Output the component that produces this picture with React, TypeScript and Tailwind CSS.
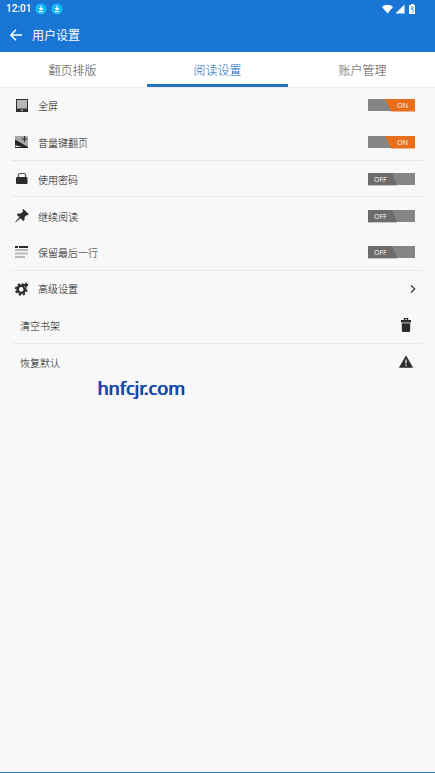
import { useState } from "react";
import type { ReactNode } from "react";

type SwitchProps = {
    id: string;
    checked: boolean;
    onChange: (checked: boolean) => void;
};

const tabs = ["翻页排版", "阅读设置", "账户管理"];

function DownloadBadge() {
    return (
        <svg viewBox="0 0 12 12" className="h-3 w-3">
            <circle cx="6" cy="6" r="5.6" fill="#12b9fb" />
            <path d="M6 2.8v4M4.2 5.2 6 7l1.8-1.8M3.8 8.6h4.4" fill="none" stroke="#fff" strokeWidth="1.2" />
        </svg>
    );
}

function StatusBar() {
    return (
        <div className="flex h-[18px] items-center justify-between pr-[18px] pl-1.5 text-white">
            <div className="flex items-center gap-1">
                <span className="w-[25px] font-[Roboto,sans-serif] text-[10px] leading-none font-medium whitespace-nowrap">12:01</span>
                <DownloadBadge />
                <DownloadBadge />
            </div>
            <div className="flex items-center gap-0.5">
                <svg viewBox="0 0 11 10" className="h-2.5 w-[11px]" fill="currentColor">
                    <path d="M5.5 9.5 0 3C1.5 1.4 3.5.7 5.5.7S9.5 1.4 11 3z" />
                </svg>
                <svg viewBox="0 0 10 10" className="h-2.5 w-2.5" fill="currentColor">
                    <path d="M9.5.5v9H.5z" />
                </svg>
                <svg viewBox="0 0 10 10" className="h-2.5 w-2.5" fill="currentColor">
                    <path d="M4 0h3v1h1v9H2V1h2z" />
                    <path d="M5 2v3.2L3.6 4M5 5.2l1.8 1.2L5.2 8.5M5.4 4.6 6.6 3.4" stroke="#1976d4" strokeWidth=".8" fill="none" />
                </svg>
            </div>
        </div>
    );
}

function DeviceIcon() {
    return (
        <svg viewBox="0 0 14 14" className="h-3.5 w-3.5">
            <path d="M1 0h12v13H1z" fill="#303030" />
            <path d="M2 1h10v8.5H2z" fill="#b8b8b8" />
            <circle cx="7" cy="11.3" r=".8" fill="#fff" />
        </svg>
    );
}

function VolumeIcon() {
    return (
        <svg viewBox="0 0 14 14" className="h-3.5 w-3.5">
            <path d="M0 0h13v12H0z" fill="#aaa" />
            <path d="M0 3.5 13 11v1H0z" fill="#262626" />
            <path d="M.5 9.3 7 11H.5z" fill="#eee" />
            <path d="M9.5 0v6M6.5 3h6" stroke="#303030" strokeWidth="1.2" />
        </svg>
    );
}

function LockIcon() {
    return (
        <svg viewBox="0 0 14 14" className="h-3.5 w-3.5">
            <path d="M3.5 6V3.200Q3.5 1.5 5 1.5h4q1.5 0 1.5 1.7V6" fill="none" stroke="#555" strokeWidth="1.2" />
            <rect x="1" y="5" width="11.5" height="7" rx="1" fill="#2b2b2b" />
        </svg>
    );
}

function PinIcon() {
    return (
        <svg viewBox="0 0 14 14" className="h-3.5 w-3.5" fill="#2b2b2b">
            <path d="M8.3 0 13.8 5.3 12.8 6.2 11.8 6 9.5 8.3 9.5 11 8.3 12 5.5 9.3 .8 13.3 .3 12.8 4.5 8.3 1.8 5.7 2.8 4.6 5.8 4.6 8 2.4 7.6 1z" />
        </svg>
    );
}

function LinesIcon() {
    return (
        <svg viewBox="0 0 14 14" className="h-3.5 w-3.5">
            <path d="M0 0h3v2H0zM4 0h9v2H4z" fill="#2b2b2b" />
            <path d="M0 3h13v2H0zM0 6.5h13v2H0zM0 10h10v2H0z" fill="#b9b9b9" />
        </svg>
    );
}

function GearIcon() {
    return (
        <svg viewBox="0 0 14 14" className="h-3.5 w-3.5">
            <circle cx="6.2" cy="7.4" r="3.6" fill="none" stroke="#2b2b2b" strokeWidth="2.6" />
            <circle cx="6.2" cy="7.4" r="5.4" fill="none" stroke="#2b2b2b" strokeWidth="1.8" strokeDasharray="2.4 1.84" />
            <path d="M8.8 0H14v5.4H9.8z" fill="#f8f8f8" />
            <path d="M11 .8v4.4M8.8 3h4.4" stroke="#2b2b2b" strokeWidth="1.8" />
        </svg>
    );
}

function TrashIcon() {
    return (
        <svg viewBox="0 0 14 14" className="h-3.5 w-3.5" fill="#2b2b2b">
            <path d="M4.8 2V0h4.4v2H12v2.5H2V2zM6 1.2V2h2v-.8z" fillRule="evenodd" />
            <path d="M2.8 5.2h8.4v7.3q0 1.5-1.5 1.5H4.3q-1.5 0-1.5-1.5z" />
        </svg>
    );
}

function WarningIcon() {
    return (
        <svg viewBox="0 0 14 14" className="h-3.5 w-3.5">
            <path d="M7 .8 13.7 12.5H.3z" fill="#2b2b2b" stroke="#2b2b2b" strokeWidth=".5" strokeLinejoin="round" />
            <path d="M6.3 4.5h1.4v4H6.3zM6.3 9.5h1.4V11H6.3z" fill="#ddd" />
        </svg>
    );
}

function Switch({ id, checked, onChange }: SwitchProps) {
    return (
        <span className="relative mr-2 block h-[13px] w-[47px] font-['Open_Sans',sans-serif] text-[7px] leading-[13px] font-normal text-white">
            <svg viewBox="0 0 47 13" className="absolute inset-0 h-full w-full">
                <path d="M0 0h47v12H0z" fill="#858585" />
                {checked ? (
                    <>
                        <path d="M17 0h30v12H23z" fill="#e86e1c" />
                        <path d="M23 12h24v1H23z" fill="#f1b48d" />
                    </>
                ) : (
                    <>
                        <path d="M0 0h24l5 12H0z" fill="#6c6c6c" />
                        <path d="M0 12h29v1H0z" fill="#c6c6c6" />
                    </>
                )}
            </svg>
            <span className={checked ? "relative block pr-[7px] text-right" : "relative block pl-1.5 text-left"}>
                {checked ? "ON" : "OFF"}
            </span>
            <input
                id={id}
                type="checkbox"
                role="switch"
                checked={checked}
                onChange={(e) => onChange(e.target.checked)}
                className="absolute inset-0 h-full w-full cursor-pointer appearance-none"
            />
        </span>
    );
}

const switchRows: { id: string; label: string; icon: ReactNode; line: string }[] = [
    { id: "fullscreen", label: "全屏", icon: <DeviceIcon />, line: "border-[#f3f3f3]" },
    { id: "volume", label: "音量键翻页", icon: <VolumeIcon />, line: "border-[#e7e7e7]" },
    { id: "password", label: "使用密码", icon: <LockIcon />, line: "border-[#e9e9e9]" },
    { id: "resume", label: "继续阅读", icon: <PinIcon />, line: "border-[#f3f3f3]" },
    { id: "lastLine", label: "保留最后一行", icon: <LinesIcon />, line: "border-[#ebebeb]" },
];

export default function App() {
    const [activeTab, setActiveTab] = useState(1);
    const [settings, setSettings] = useState<Record<string, boolean>>({ fullscreen: true, volume: true });

    return (
        <div className="flex min-h-screen flex-col border-b border-[#2080c8] bg-[#f8f8f8] font-['Noto_Sans_CJK_SC',sans-serif] text-[#0a0a0a]">
            <header className="bg-[#1976d4]">
                <StatusBar />
                <div className="flex h-[34px] items-center gap-2 px-2 text-white">
                    <button type="button" aria-label="返回" className="flex w-4 justify-center">
                        <svg viewBox="0 0 14 14" className="h-3.5 w-3.5" fill="none" stroke="currentColor" strokeWidth="1.5">
                            <path d="M13 7H2M7 1.8 1.8 7 7 12.2" />
                        </svg>
                    </button>
                    <h1 className="text-xs">用户设置</h1>
                </div>
            </header>

            <nav className="grid h-[35px] grid-cols-3 bg-white font-light shadow-[0_1px_0_#eeeeee]">
                {tabs.map((tab, i) => (
                    <button
                        key={tab}
                        type="button"
                        onClick={() => setActiveTab(i)}
                        className={
                            i === activeTab
                                ? "mx-0.5 border-b-3 border-[#2474c0] pt-[3px] text-xs text-[#0f66bc]"
                                : "mx-0.5 border-b-3 border-transparent pt-[3px] text-xs text-[#4c4c4c]"
                        }
                    >
                        {tab}
                    </button>
                ))}
            </nav>

            <main className="grid h-[294px] grid-rows-8 px-3 text-[10px] font-light">
                {switchRows.map((row) => (
                    <div key={row.id} className={`flex items-center border-b pt-0.5 pl-[3px] ${row.line}`}>
                        {row.icon}
                        <label htmlFor={row.id} className="flex-1 pl-[9px]">
                            {row.label}
                        </label>
                        <Switch
                            id={row.id}
                            checked={!!settings[row.id]}
                            onChange={(checked) => setSettings({ ...settings, [row.id]: checked })}
                        />
                    </div>
                ))}
                <button type="button" className="flex items-center border-b border-transparent pl-[3px] text-left">
                    <GearIcon />
                    <span className="flex-1 pl-[9px]">高级设置</span>
                    <svg viewBox="0 0 6 8" className="mr-[7px] h-2 w-1.5" fill="none" stroke="#333" strokeWidth="1.1">
                        <path d="M1 .5 4.8 4 1 7.5" />
                    </svg>
                </button>
                <button type="button" className="flex items-center justify-between border-b border-[#ebebeb] pr-2.5 pl-2">
                    清空书架
                    <TrashIcon />
                </button>
                <button type="button" className="flex items-center justify-between border-b border-transparent pr-2.5 pl-2">
                    恢复默认
                    <WarningIcon />
                </button>
            </main>

            <p className="pl-[97px] font-['Noto_Sans',sans-serif] text-lg leading-[14px] text-[#1452c4] [text-shadow:1px_0_0_#0a2f7c]">
                hnfcjr.com
            </p>
        </div>
    );
}
